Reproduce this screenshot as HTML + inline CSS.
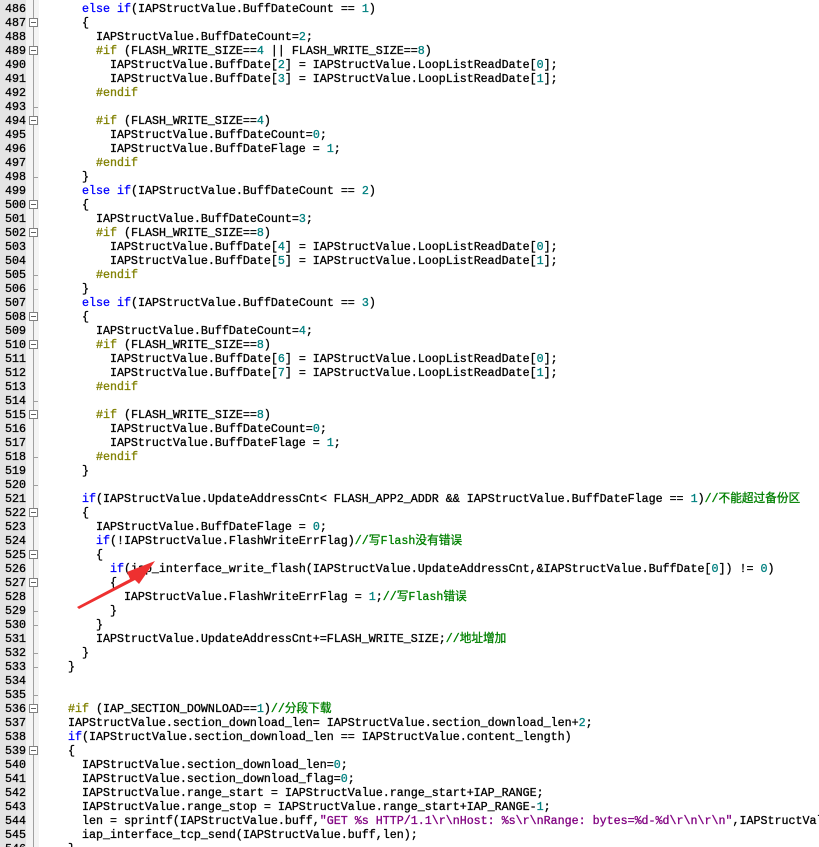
<!DOCTYPE html>
<html><head><meta charset="utf-8"><style>
body{margin:0;width:819px;height:847px;overflow:hidden;background:#fff;position:relative;font-family:"Liberation Mono","Noto Sans CJK SC",monospace;font-size:11.67px;}
#wrap{position:absolute;left:0;top:0;width:819px;height:847px;overflow:hidden;}
#g1{position:absolute;left:0;top:0;width:26px;height:847px;background:#e4e4e4;}
#g2{position:absolute;left:26px;top:0;width:13px;height:847px;background:#f4f4f4;}
#vl{position:absolute;left:33px;top:0;width:1px;height:847px;background:#a0a0a0;}
.ln{position:absolute;left:0;width:26px;text-align:right;color:#000;height:14px;line-height:14px;-webkit-text-stroke:0.3px #000;}
.c{position:absolute;left:40px;white-space:pre;height:14px;line-height:14px;color:#000;-webkit-text-stroke:0.3px currentColor;}
.c span{-webkit-text-stroke:0.3px currentColor;}
.k{color:#0000ff}.p{color:#808000}.m{color:#008000}.n{color:#008080}.s{color:#800080}
.fb{position:absolute;left:29px;width:7px;height:7px;border:1px solid #808080;background:#fff;}
.fb:after{content:"";position:absolute;left:1px;top:3px;width:5px;height:1px;background:#606060;}
.tk{position:absolute;left:34px;width:4px;height:1px;background:#a0a0a0;}
</style></head><body><div id="wrap">
<div id="g1"></div><div id="g2"></div><div id="vl"></div>
<div id="lines"></div>
<svg style="position:absolute;left:0;top:0" width="819" height="847"><polygon points="77,607 130,579 127,572 155,561 139,584 135,580 79,609" fill="#ee3030"/></svg>
</div>
<script>
const L=[
'      <k>else</k> <k>if</k>(IAPStructValue.BuffDateCount == <n>1</n>)',
'      {',
'        IAPStructValue.BuffDateCount=<n>2</n>;',
'        <p>#if</p> (FLASH_WRITE_SIZE==<n>4</n> || FLASH_WRITE_SIZE==<n>8</n>)',
'          IAPStructValue.BuffDate[<n>2</n>] = IAPStructValue.LoopListReadDate[<n>0</n>];',
'          IAPStructValue.BuffDate[<n>3</n>] = IAPStructValue.LoopListReadDate[<n>1</n>];',
'        <p>#endif</p>',
'',
'        <p>#if</p> (FLASH_WRITE_SIZE==<n>4</n>)',
'          IAPStructValue.BuffDateCount=<n>0</n>;',
'          IAPStructValue.BuffDateFlage = <n>1</n>;',
'        <p>#endif</p>',
'      }',
'      <k>else</k> <k>if</k>(IAPStructValue.BuffDateCount == <n>2</n>)',
'      {',
'        IAPStructValue.BuffDateCount=<n>3</n>;',
'        <p>#if</p> (FLASH_WRITE_SIZE==<n>8</n>)',
'          IAPStructValue.BuffDate[<n>4</n>] = IAPStructValue.LoopListReadDate[<n>0</n>];',
'          IAPStructValue.BuffDate[<n>5</n>] = IAPStructValue.LoopListReadDate[<n>1</n>];',
'        <p>#endif</p>',
'      }',
'      <k>else</k> <k>if</k>(IAPStructValue.BuffDateCount == <n>3</n>)',
'      {',
'        IAPStructValue.BuffDateCount=<n>4</n>;',
'        <p>#if</p> (FLASH_WRITE_SIZE==<n>8</n>)',
'          IAPStructValue.BuffDate[<n>6</n>] = IAPStructValue.LoopListReadDate[<n>0</n>];',
'          IAPStructValue.BuffDate[<n>7</n>] = IAPStructValue.LoopListReadDate[<n>1</n>];',
'        <p>#endif</p>',
'',
'        <p>#if</p> (FLASH_WRITE_SIZE==<n>8</n>)',
'          IAPStructValue.BuffDateCount=<n>0</n>;',
'          IAPStructValue.BuffDateFlage = <n>1</n>;',
'        <p>#endif</p>',
'      }',
'',
'      <k>if</k>(IAPStructValue.UpdateAddressCnt&lt; FLASH_APP2_ADDR &amp;&amp; IAPStructValue.BuffDateFlage == <n>1</n>)<m>//不能超过备份区</m>',
'      {',
'        IAPStructValue.BuffDateFlage = <n>0</n>;',
'        <k>if</k>(!IAPStructValue.FlashWriteErrFlag)<m>//写Flash没有错误</m>',
'        {',
'          <k>if</k>(iap_interface_write_flash(IAPStructValue.UpdateAddressCnt,&amp;IAPStructValue.BuffDate[<n>0</n>]) != <n>0</n>)',
'          {',
'            IAPStructValue.FlashWriteErrFlag = <n>1</n>;<m>//写Flash错误</m>',
'          }',
'        }',
'        IAPStructValue.UpdateAddressCnt+=FLASH_WRITE_SIZE;<m>//地址增加</m>',
'      }',
'    }',
'',
'',
'    <p>#if</p> (IAP_SECTION_DOWNLOAD==<n>1</n>)<m>//分段下载</m>',
'    IAPStructValue.section_download_len= IAPStructValue.section_download_len+<n>2</n>;',
'    <k>if</k>(IAPStructValue.section_download_len == IAPStructValue.content_length)',
'    {',
'      IAPStructValue.section_download_len=<n>0</n>;',
'      IAPStructValue.section_download_flag=<n>0</n>;',
'      IAPStructValue.range_start = IAPStructValue.range_start+IAP_RANGE;',
'      IAPStructValue.range_stop = IAPStructValue.range_start+IAP_RANGE-<n>1</n>;',
'      len = sprintf(IAPStructValue.buff,<s>"GET %s HTTP/1.1\\r\\nHost: %s\\r\\nRange: bytes=%d-%d\\r\\n\\r\\n"</s>,IAPStructVal',
'      iap_interface_tcp_send(IAPStructValue.buff,len);',
'    }'
];
const folds=[487,489,494,500,502,508,510,515,522,525,527,536,539];
const ticks=[493,498,505,506,514,518,520,529,530,532,533,535];
let h='';
L.forEach((t,i)=>{const n=486+i,y=2+14*i;
t=t.replace(/<(k|p|m|n|s)>/g,'<span class="$1">').replace(/<\/(k|p|m|n|s)>/g,'</span>');
h+=`<div class="ln" style="top:${y}px">${n}</div><div class="c" style="top:${y}px">${t}</div>`;
if(folds.includes(n))h+=`<div class="fb" style="top:${y+2}px"></div>`;
if(ticks.includes(n))h+=`<div class="tk" style="top:${y+7}px"></div>`;
});
document.getElementById('lines').innerHTML=h;
</script>
</body></html>
